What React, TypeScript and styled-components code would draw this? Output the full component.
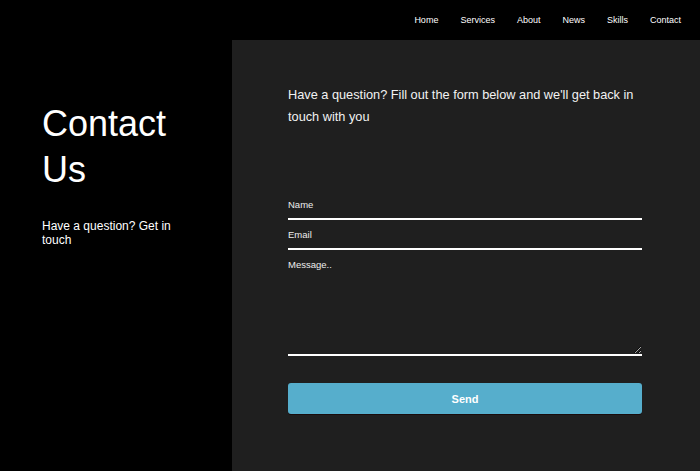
import React from "react";
import styled, { createGlobalStyle } from "styled-components";

const Global = createGlobalStyle`
  html, body { margin: 0; padding: 0; background: #000; }
  body { font-family: "Liberation Sans", Arial, sans-serif; }
  * { box-sizing: border-box; }
`;

const Page = styled.div`
  width: 700px;
  min-height: 471px;
  display: flex;
  flex-direction: column;
  background: #000;
  color: #fff;
`;

const Header = styled.header`
  height: 40px;
  display: flex;
  align-items: center;
  justify-content: flex-end;
  padding-right: 19px;
  background: #000;
`;

const Nav = styled.nav`
  display: flex;
  gap: 22px;
`;

const NavLink = styled.a`
  color: #fff;
  font-size: 9px;
  text-decoration: none;
`;

const Body = styled.main`
  flex: 1;
  display: grid;
  grid-template-columns: 232px 1fr;
  min-height: 431px;
`;

const Side = styled.section`
  background: #000;
  padding: 61px 42px 0;
`;

const Title = styled.h1`
  margin: 0;
  font-size: 36px;
  line-height: 46px;
  font-weight: 400;
  color: #fff;
`;

const SideText = styled.p`
  margin: 26px 0 0;
  font-size: 12px;
  color: #fff;
`;

const Panel = styled.section`
  background: #1f1f1f;
  padding: 44px 58px 40px 56px;
`;

const Intro = styled.p`
  margin: 0;
  font-size: 12.75px;
  line-height: 22px;
  color: #f2f2f2;
`;

const Form = styled.form`
  margin-top: 62px;
  display: flex;
  flex-direction: column;
`;

const Field = styled.input`
  height: 30px;
  padding: 1px 0 0;
  border: none;
  border-bottom: 2px solid #fff;
  background: transparent;
  color: #fff;
  font-family: "Liberation Sans", Arial, sans-serif;
  font-size: 9.5px;
  outline: none;
  &::placeholder { color: #ededed; }
`;

const Message = styled.textarea`
  height: 106px;
  padding: 9px 0 0;
  border: none;
  border-bottom: 2px solid #fff;
  background: transparent;
  color: #fff;
  font-family: "Liberation Sans", Arial, sans-serif;
  font-size: 9.5px;
  outline: none;
  &::placeholder { color: #ededed; }
`;

const SendButton = styled.button`
  margin-top: 27px;
  height: 31px;
  border: none;
  border-radius: 3px;
  background: #56aecc;
  box-shadow: 0 1px 0 #1a0c0c;
  color: #fff;
  font-family: "Liberation Sans", Arial, sans-serif;
  font-size: 11px;
  font-weight: 700;
  cursor: pointer;
`;

const links = ["Home", "Services", "About", "News", "Skills", "Contact"];

export default function App() {
  return (
    <>
      <Global />
      <Page>
        <Header>
          <Nav>
            {links.map((l) => (
              <NavLink key={l} href="#">
                {l}
              </NavLink>
            ))}
          </Nav>
        </Header>
        <Body>
          <Side>
            <Title>
              Contact
              <br />
              Us
            </Title>
            <SideText>Have a question? Get in touch</SideText>
          </Side>
          <Panel>
            <Intro>
              Have a question? Fill out the form below and we'll get back in touch with you
            </Intro>
            <Form onSubmit={(e) => e.preventDefault()}>
              <Field type="text" placeholder="Name" />
              <Field type="email" placeholder="Email" />
              <Message placeholder="Message.." />
              <SendButton type="submit">Send</SendButton>
            </Form>
          </Panel>
        </Body>
      </Page>
    </>
  );
}
